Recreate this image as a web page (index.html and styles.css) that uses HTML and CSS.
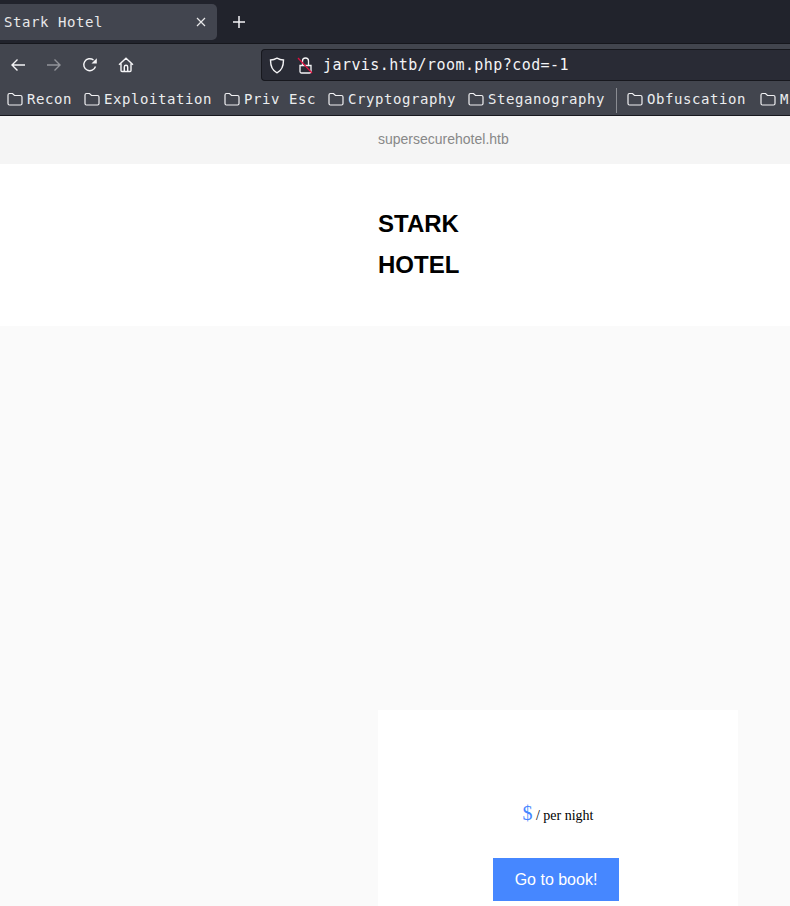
FILE: index.html
```html
<!DOCTYPE html>
<html lang="en">
<head>
<meta charset="utf-8">
<title>Stark Hotel</title>
<link rel="stylesheet" href="styles.css">
</head>
<body>
<div class="browser">
  <div class="tabbar">
    <div class="tab">
      <span class="tab-title">Stark Hotel</span>
      <svg class="tab-close" width="10" height="10" viewBox="0 0 10 10"><path d="M1 1l8 8M9 1l-8 8"/></svg>
    </div>
    <svg class="new-tab" width="14" height="14" viewBox="0 0 14 14"><path d="M7 1v12M1 7h12"/></svg>
  </div>
  <div class="navbar">
    <svg class="nav-icon" width="16" height="16" viewBox="0 0 16 16"><path d="M15 8H2M7.500 2.500L2 8l5.500 5.500"/></svg>
    <svg class="nav-icon dim" width="16" height="16" viewBox="0 0 16 16"><path d="M1 8h13M8.500 2.500L14 8l-5.500 5.500"/></svg>
    <svg class="nav-icon" width="16" height="16" viewBox="0 0 16 16"><path d="M13.500 9.500A6 6 0 1 1 11.500 3"/><path class="fill" d="M14.800 1.200v5.300H9.500z"/></svg>
    <svg class="nav-icon" width="16" height="16" viewBox="0 0 16 16"><path d="M1 7.800L8 1.300l7 6.500M3 6.500v7a1 1 0 0 0 1 1h8a1 1 0 0 0 1-1v-7M6.300 14.500V10a1.700 1.700 0 0 1 3.400 0v4.500"/></svg>
    <div class="urlbar">
      <svg class="url-icon" width="16" height="17" viewBox="0 0 16 17"><path d="M8 1.200c2 1.200 4.300 1.800 6.500 1.800 0 6-1.500 10.500-6.500 12.800C3 13.500 1.500 9 1.500 3c2.200 0 4.500-.6 6.500-1.800z"/></svg>
      <svg class="lock-icon" width="16" height="17" viewBox="0 0 16 17"><path d="M5.500 8V4a3 3 0 0 1 6 0v4M3 8.500h11v6a1.500 1.500 0 0 1-1.500 1.500h-8A1.500 1.500 0 0 1 3 14.500z"/><path class="slash" d="M1 1l14 15"/></svg>
      <span class="url-text">jarvis.htb/room.php?cod=-1</span>
    </div>
  </div>
  <div class="bookmarks">
    <div class="bookmark"><svg class="folder" width="16" height="14" viewBox="0 0 16 14"><path d="M1 3a1.500 1.500 0 0 1 1.500-1.500h3L7.500 3.500h6A1.500 1.500 0 0 1 15 5v6.500a1.500 1.500 0 0 1-1.500 1.500h-11A1.500 1.500 0 0 1 1 11.500z"/></svg><span>Recon</span></div>
    <div class="bookmark"><svg class="folder" width="16" height="14" viewBox="0 0 16 14"><path d="M1 3a1.500 1.500 0 0 1 1.500-1.500h3L7.500 3.500h6A1.500 1.500 0 0 1 15 5v6.500a1.500 1.500 0 0 1-1.500 1.500h-11A1.500 1.500 0 0 1 1 11.500z"/></svg><span>Exploitation</span></div>
    <div class="bookmark"><svg class="folder" width="16" height="14" viewBox="0 0 16 14"><path d="M1 3a1.500 1.500 0 0 1 1.500-1.500h3L7.500 3.500h6A1.500 1.500 0 0 1 15 5v6.500a1.500 1.500 0 0 1-1.500 1.500h-11A1.500 1.500 0 0 1 1 11.500z"/></svg><span>Priv Esc</span></div>
    <div class="bookmark"><svg class="folder" width="16" height="14" viewBox="0 0 16 14"><path d="M1 3a1.500 1.500 0 0 1 1.500-1.500h3L7.500 3.500h6A1.500 1.500 0 0 1 15 5v6.500a1.500 1.500 0 0 1-1.500 1.500h-11A1.500 1.500 0 0 1 1 11.500z"/></svg><span>Cryptography</span></div>
    <div class="bookmark"><svg class="folder" width="16" height="14" viewBox="0 0 16 14"><path d="M1 3a1.500 1.500 0 0 1 1.500-1.500h3L7.500 3.500h6A1.500 1.500 0 0 1 15 5v6.500a1.500 1.500 0 0 1-1.500 1.500h-11A1.500 1.500 0 0 1 1 11.500z"/></svg><span>Steganography</span></div>
    <div class="separator"></div>
    <div class="bookmark"><svg class="folder" width="16" height="14" viewBox="0 0 16 14"><path d="M1 3a1.500 1.500 0 0 1 1.500-1.500h3L7.500 3.500h6A1.500 1.500 0 0 1 15 5v6.500a1.500 1.500 0 0 1-1.500 1.500h-11A1.500 1.500 0 0 1 1 11.500z"/></svg><span>Obfuscation</span></div>
    <div class="bookmark bookmark-last"><svg class="folder" width="16" height="14" viewBox="0 0 16 14"><path d="M1 3a1.500 1.500 0 0 1 1.500-1.500h3L7.500 3.500h6A1.500 1.500 0 0 1 15 5v6.500a1.500 1.500 0 0 1-1.500 1.500h-11A1.500 1.500 0 0 1 1 11.500z"/></svg><span>Mi</span></div>
  </div>
</div>
<div class="topbar"><a class="topbar-link">supersecurehotel.htb</a></div>
<header class="brand"><h1 class="brand-name">STARK<br>HOTEL</h1></header>
<main class="content">
  <section class="card">
    <p class="price"><span class="amount">$</span> / per night</p>
    <a class="book-btn">Go to book!</a>
  </section>
</main>
</body>
</html>
```
FILE: styles.css
```css
* { box-sizing: border-box; }
html, body { margin: 0; padding: 0; height: 906px; overflow: hidden; }
body { background: #fafafa; font-family: "Liberation Serif", serif; display: flex; flex-direction: column; }

.browser { flex: none; font-family: "DejaVu Sans Mono", monospace; color: #f4f4f6; overflow: hidden; }

.tabbar { height: 44px; background: #21232c; display: flex; align-items: flex-start; padding-top: 4px; border-bottom: 1px solid #16171d; }
.tab { width: 217px; height: 36px; background: #42454f; border-radius: 0 5px 5px 0; display: flex; align-items: center; justify-content: space-between; padding: 0 11px 0 4px; }
.tab-title { font-size: 14px; letter-spacing: .57px; color: #e8e8ea; }
.tab-close path { stroke: #e8e8ea; stroke-width: 1.200; fill: none; }
.new-tab { margin-left: 15px; margin-top: 11px; }
.new-tab path { stroke: #f4f4f6; stroke-width: 1.500; fill: none; }

.navbar { height: 44px; background: #42454e; display: flex; align-items: center; padding: 0 0 2px 10px; }
.nav-icon { margin-right: 20px; flex: none; }
.nav-icon path { stroke: #f4f4f6; stroke-width: 1.400; fill: none; }
.nav-icon path.fill { fill: #f4f4f6; stroke: none; }
.nav-icon.dim { opacity: .45; }
.urlbar { margin-left: 107px; flex: 1; height: 32px; background: #292b35; border: 1px solid #17181e; border-right: 0; border-radius: 4px 0 0 4px; display: flex; align-items: center; padding-left: 7px; }
.url-icon { flex: none; margin-right: 12px; }
.url-icon path { stroke: #f4f4f6; stroke-width: 1.400; fill: none; }
.lock-icon { flex: none; margin-right: 10px; }
.lock-icon path { stroke: #f4f4f6; stroke-width: 1.300; fill: none; }
.lock-icon path.slash { stroke: #e0103f; stroke-width: 1.200; }
.url-text { font-size: 15px; letter-spacing: .43px; white-space: nowrap; }

.bookmarks { height: 28px; background: #42454e; border-bottom: 1px solid #17181e; display: flex; align-items: center; padding: 0 0 5px 7px; gap: 12px; white-space: nowrap; }
.bookmark { display: flex; align-items: center; gap: 4px; flex: none; }
.bookmark-last { margin-left: 2px; }
.bookmark span { font-size: 14px; letter-spacing: .57px; color: #ecedef; }
.folder { flex: none; }
.folder path { stroke: #f0f0f2; stroke-width: 1.200; fill: none; }
.separator { width: 1px; height: 25px; background: #8a8c92; flex: none; margin: 3px -2px 0 -1px; }

.topbar { flex: none; height: 48px; background: #f5f5f5; padding: 0 0 2px 378px; display: flex; align-items: center; }
.topbar-link { font-family: "Liberation Sans", sans-serif; font-size: 14px; color: #888; }

.brand { flex: none; height: 162px; background: #fff; padding: 39px 0 0 378px; }
.brand-name { margin: 0; font-family: "Liberation Sans", sans-serif; font-size: 24px; font-weight: 700; line-height: 41px; color: #000; }

.content { flex: 1; padding: 384px 0 0 378px; background: #fafafa; overflow: hidden; }
.card { width: 360px; height: 196px; background: #fff; padding-top: 89px; text-align: center; }
.price { margin: 0 0 28px; font-size: 14px; line-height: 28px; color: #000; }
.amount { font-size: 20px; color: #4687ff; }
.book-btn { display: block; width: 126px; height: 43px; margin-left: 115px; background: #4687ff; color: #fff; font-family: "Liberation Sans", sans-serif; font-size: 16px; line-height: 43px; text-align: center; }
```
